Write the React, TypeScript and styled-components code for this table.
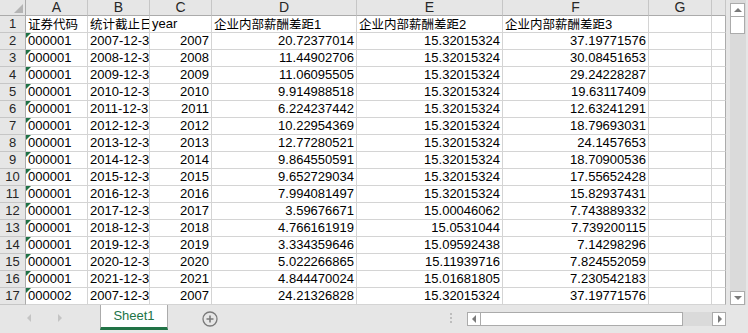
import React from 'react';
import styled, { createGlobalStyle, css } from 'styled-components';

const Global = createGlobalStyle`
  html, body {
    margin: 0;
    padding: 0;
    background: #e6e6e6;
  }
  body {
    font-family: "Liberation Sans", Arial, "Noto Sans CJK SC", sans-serif;
    color: #000;
  }
`;

const Window = styled.div`
  width: 748px;
  height: 333px;
  display: flex;
  flex-direction: column;
  overflow: hidden;
  background: #e6e6e6;
`;

const Main = styled.div`
  display: flex;
  height: 305px;
  overflow: hidden;
`;

const Sheet = styled.div`
  display: grid;
  grid-template-columns: 26px 62px 62px 62px 145px 146px 146px 63px 14px;
  grid-template-rows: 16px repeat(17, 17px);
  width: 726px;
  background: #fff;
`;

const Corner = styled.div`
  position: relative;
  background: #e6e6e6;
  border-right: 1px solid #ababab;
  border-bottom: 1px solid #ababab;
  &::after {
    content: '';
    position: absolute;
    right: 2px;
    bottom: 2px;
    border-style: solid;
    border-width: 0 0 9px 9px;
    border-color: transparent transparent #b4b4b4 transparent;
  }
`;

const ColHead = styled.div`
  background: #e6e6e6;
  border-right: 1px solid #c6c6c6;
  border-bottom: 1px solid #ababab;
  font-size: 14px;
  line-height: 15px;
  color: #262626;
  text-align: center;
  overflow: hidden;
`;

const RowHead = styled.div`
  background: #e6e6e6;
  border-right: 1px solid #ababab;
  border-bottom: 1px solid #c6c6c6;
  font-size: 13px;
  line-height: 16px;
  color: #262626;
  text-align: center;
`;

const Cell = styled.div<{ $right?: boolean; $flag?: boolean; $edge?: boolean }>`
  position: relative;
  border-right: 1px solid ${p => (p.$edge ? '#ababab' : '#d4d4d4')};
  border-bottom: 1px solid #d4d4d4;
  font-size: 13px;
  line-height: 16px;
  padding: 0 2px;
  white-space: nowrap;
  overflow: hidden;
  text-align: ${p => (p.$right ? 'right' : 'left')};
  ${p =>
    p.$flag &&
    css`
      &::before {
        content: '';
        position: absolute;
        left: 0;
        top: 0;
        border-style: solid;
        border-width: 5px 5px 0 0;
        border-color: #1e7145 transparent transparent transparent;
      }
    `}
`;

const Han = styled.span`
  font-size: 12.5px;
  font-family: "Noto Sans CJK SC", sans-serif;
`;

const VScroll = styled.div`
  width: 22px;
  padding: 0 2px 0 4px;
  box-sizing: border-box;
  display: flex;
`;

const VTrack = styled.div`
  flex: 1;
  background: #dadada;
  display: flex;
  flex-direction: column;
  padding-top: 3px;
`;

const ArrowBtn = styled.div`
  width: 15px;
  height: 14px;
  box-sizing: border-box;
  background: #fff;
  border: 1px solid #ababab;
  display: flex;
  align-items: center;
  justify-content: center;
`;

const VThumb = styled.div`
  width: 15px;
  height: 17px;
  box-sizing: border-box;
  background: #fff;
  border: 1px solid #ababab;
  border-top: none;
`;

const Spacer = styled.div`
  flex: 1;
`;

const Bottom = styled.div`
  height: 28px;
  display: flex;
  align-items: flex-start;
`;

const Nav = styled.div`
  width: 100px;
  height: 26px;
  display: flex;
  align-items: center;
  gap: 22px;
  padding-left: 25px;
  box-sizing: border-box;
`;

const Tab = styled.div`
  width: 68px;
  height: 25px;
  box-sizing: border-box;
  background: #fff;
  border-left: 1px solid #ababab;
  border-right: 1px solid #ababab;
  border-bottom: 3px solid #217346;
  color: #217346;
  font-size: 13px;
  line-height: 22px;
  text-align: center;
`;

const AddSheet = styled.div`
  margin: 6px 0 0 34px;
  width: 16px;
  height: 16px;
`;

const Grip = styled.div`
  width: 2px;
  height: 12px;
  margin: 8px 15px 0 0;
  background: repeating-linear-gradient(to bottom, #bdbdbd 0 2px, transparent 2px 4px);
`;

const HScroll = styled.div`
  width: 259px;
  height: 14px;
  margin-top: 7px;
  display: flex;
  background: #dadada;
`;

const HBtn = styled(ArrowBtn)`
  width: 14px;
  height: 14px;
`;

const HThumb = styled.div`
  width: 202px;
  height: 14px;
  box-sizing: border-box;
  background: #fff;
  border: 1px solid #ababab;
  border-left: none;
`;

const cols = ['A', 'B', 'C', 'D', 'E', 'F', 'G', ''];

const rows: [string, number, string, string, string][] = [
  ['000001', 2007, '20.72377014', '15.32015324', '37.19771576'],
  ['000001', 2008, '11.44902706', '15.32015324', '30.08451653'],
  ['000001', 2009, '11.06095505', '15.32015324', '29.24228287'],
  ['000001', 2010, '9.914988518', '15.32015324', '19.63117409'],
  ['000001', 2011, '6.224237442', '15.32015324', '12.63241291'],
  ['000001', 2012, '10.22954369', '15.32015324', '18.79693031'],
  ['000001', 2013, '12.77280521', '15.32015324', '24.1457653'],
  ['000001', 2014, '9.864550591', '15.32015324', '18.70900536'],
  ['000001', 2015, '9.652729034', '15.32015324', '17.55652428'],
  ['000001', 2016, '7.994081497', '15.32015324', '15.82937431'],
  ['000001', 2017, '3.59676671', '15.00046062', '7.743889332'],
  ['000001', 2018, '4.766161919', '15.0531044', '7.739200115'],
  ['000001', 2019, '3.334359646', '15.09592438', '7.14298296'],
  ['000001', 2020, '5.022266865', '15.11939716', '7.824552059'],
  ['000001', 2021, '4.844470024', '15.01681805', '7.230542183'],
  ['000002', 2007, '24.21326828', '15.32015324', '37.19771576'],
];

const Tri = ({ dir, color = '#7a7a7a' }: { dir: 'up' | 'down' | 'left' | 'right'; color?: string }) => {
  const pts = {
    up: '1,6 9,6 5,2',
    down: '1,2 9,2 5,6',
    left: '6,1 6,9 2,5',
    right: '3,1 3,9 7,5',
  }[dir];
  const vertical = dir === 'up' || dir === 'down';
  return (
    <svg width={vertical ? 10 : 8} height={vertical ? 8 : 10} viewBox={vertical ? '0 0 10 8' : '0 0 8 10'}>
      <polygon points={pts} fill={color} />
    </svg>
  );
};

export default function App() {
  return (
    <Window>
      <Global />
      <Main>
        <Sheet>
          <Corner />
          {cols.map((c, i) => (
            <ColHead key={i}>{c}</ColHead>
          ))}

          <RowHead>1</RowHead>
          <Cell><Han>证券代码</Han></Cell>
          <Cell><Han>统计截止日期</Han></Cell>
          <Cell>year</Cell>
          <Cell><Han>企业内部薪酬差距</Han>1</Cell>
          <Cell><Han>企业内部薪酬差距</Han>2</Cell>
          <Cell><Han>企业内部薪酬差距</Han>3</Cell>
          <Cell />
          <Cell $edge />

          {rows.map((r, i) => (
            <React.Fragment key={i}>
              <RowHead>{i + 2}</RowHead>
              <Cell $flag>{r[0]}</Cell>
              <Cell>{`${r[1]}-12-31`}</Cell>
              <Cell $right>{r[1]}</Cell>
              <Cell $right>{r[2]}</Cell>
              <Cell $right>{r[3]}</Cell>
              <Cell $right>{r[4]}</Cell>
              <Cell />
              <Cell $edge />
            </React.Fragment>
          ))}
        </Sheet>
        <VScroll>
          <VTrack>
            <ArrowBtn><Tri dir="up" /></ArrowBtn>
            <VThumb />
            <Spacer />
            <ArrowBtn><Tri dir="down" /></ArrowBtn>
          </VTrack>
        </VScroll>
      </Main>
      <Bottom>
        <Nav>
          <Tri dir="left" color="#c4c4c4" />
          <Tri dir="right" color="#c4c4c4" />
        </Nav>
        <Tab>Sheet1</Tab>
        <AddSheet>
          <svg width="16" height="16" viewBox="0 0 16 16">
            <circle cx="8" cy="8" r="7" fill="none" stroke="#7a7a7a" strokeWidth="1.3" />
            <path d="M8 4.5v7M4.5 8h7" stroke="#7a7a7a" strokeWidth="1.6" />
          </svg>
        </AddSheet>
        <Spacer />
        <Grip />
        <HScroll>
          <HBtn><Tri dir="left" /></HBtn>
          <HThumb />
          <Spacer />
          <HBtn><Tri dir="right" /></HBtn>
        </HScroll>
        <div style={{ width: 22 }} />
      </Bottom>
    </Window>
  );
}
